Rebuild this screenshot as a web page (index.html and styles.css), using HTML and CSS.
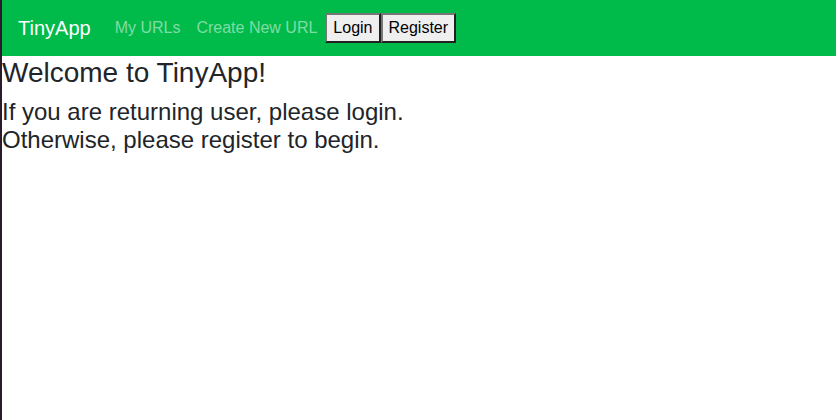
FILE: index.html
```html
<!DOCTYPE html>
<html>
<head>
<meta charset="utf-8">
<link rel="stylesheet" href="styles.css">
</head>
<body>
<div class="frame">
  <nav class="navbar">
    <a class="brand" href="#">TinyApp</a>
    <div class="nav">
      <a class="nav-link" href="#">My URLs</a>
      <a class="nav-link" href="#">Create New URL</a>
      <form class="auth"><button type="button">Login</button><button type="button">Register</button></form>
    </div>
  </nav>
  <main class="content">
    <h3 class="title">Welcome to TinyApp!</h3>
    <h4 class="lead">If you are returning user, please login.<br>Otherwise, please register to begin.</h4>
  </main>
</div>
</body>
</html>
```
FILE: styles.css
```css
html, body {
  margin: 0;
  height: 100%;
}
body {
  background: #2a1b2b;
  font-family: "Liberation Sans", Arial, sans-serif;
  font-size: 16px;
  line-height: 1.5;
  color: #212529;
}
.frame {
  margin-left: 2px;
  height: 100%;
  background: #fff;
}
.navbar {
  display: flex;
  align-items: center;
  padding: 8px 16px;
  background: #00ba4a;
}
.brand {
  font-size: 20px;
  line-height: 30px;
  padding: 5px 0;
  margin-right: 16px;
  color: #fff;
  text-decoration: none;
}
.nav {
  display: flex;
  align-items: center;
}
.nav-link {
  padding: 8px;
  color: rgba(255,255,255,0.5);
  text-decoration: none;
}
.auth {
  display: flex;
  margin: 0;
}
.auth button {
  font-family: inherit;
  font-size: inherit;
  line-height: inherit;
  margin: 0;
  padding: 1px 6px;
  background: #efefef;
  border: 2px outset #767676;
  color: #000;
}
.content {
  padding: 0;
}
.title {
  margin: 0 0 8px;
  font-size: 28px;
  font-weight: 400;
  line-height: 1.2;
}
.lead {
  margin: 0 0 8px;
  font-size: 24px;
  font-weight: 400;
  line-height: 1.2;
}
```
